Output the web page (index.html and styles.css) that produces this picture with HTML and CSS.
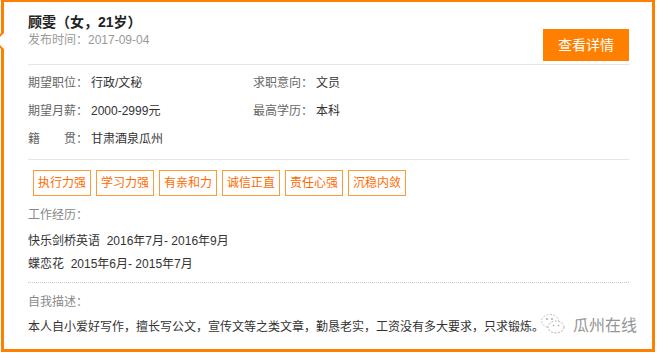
FILE: index.html
```html
<!DOCTYPE html>
<html>
<head>
  <meta charset="utf-8">
  <link rel="stylesheet" href="styles.css">
</head>
<body>
  <div class="card">
    <div class="head">
      <div class="who">
        <h2 class="name">顾雯（女，21岁）</h2>
        <p class="date">发布时间：2017-09-04</p>
      </div>
      <a class="more" href="#">查看详情</a>
    </div>

    <div class="info">
      <div class="row"><span class="lbl">期望职位：</span><span class="val">行政/文秘</span></div>
      <div class="row"><span class="lbl">求职意向：</span><span class="val">文员</span></div>
      <div class="row"><span class="lbl">期望月薪：</span><span class="val">2000-2999元</span></div>
      <div class="row"><span class="lbl">最高学历：</span><span class="val">本科</span></div>
      <div class="row"><span class="lbl">籍　　贯：</span><span class="val">甘肃酒泉瓜州</span></div>
    </div>

    <div class="tags">
      <span class="tag">执行力强</span>
      <span class="tag">学习力强</span>
      <span class="tag">有亲和力</span>
      <span class="tag">诚信正直</span>
      <span class="tag">责任心强</span>
      <span class="tag">沉稳内敛</span>
    </div>

    <div class="work">
      <p class="sub">工作经历：</p>
      <p class="job">快乐剑桥英语&nbsp;&nbsp;2016年7月- 2016年9月</p>
      <p class="job">蝶恋花&nbsp;&nbsp;2015年6月- 2015年7月</p>
    </div>

    <div class="self">
      <p class="sub">自我描述：</p>
      <p class="desc">本人自小爱好写作，擅长写公文，宣传文等之类文章，勤恳老实，工资没有多大要求，只求锻炼。</p>
    </div>

    <!-- 公众号水印 -->
    <div class="mark">
      <svg width="26" height="22" viewBox="0 0 26 22">
        <ellipse cx="10" cy="8" rx="8.5" ry="6.5" fill="none" stroke="#bbb" stroke-width="1" stroke-dasharray="2 1.5"/>
        <ellipse cx="16" cy="14" rx="8" ry="6" fill="#fff" stroke="#aaa" stroke-width="1" stroke-dasharray="2 1.5"/>
        <circle cx="7" cy="6" r="0.9" fill="#999"/>
        <circle cx="12" cy="6" r="0.9" fill="#999"/>
        <circle cx="13.5" cy="12.5" r="0.8" fill="#999"/>
        <circle cx="18.5" cy="12.5" r="0.8" fill="#999"/>
      </svg>
      <span>瓜州在线</span>
    </div>
  </div>
</body>
</html>
```

FILE: styles.css
```css
body {
  margin: 0;
  background: #fff;
  font-family: "Liberation Sans", "Noto Sans CJK SC", sans-serif;
  font-size: 12px;
  color: #333;
}

p, h2 {
  margin: 0;
}

.card {
  position: relative;
  box-sizing: border-box;
  width: 654px;
  height: 353px;
  margin: -1px 0 0 1px;
  padding: 0 23px 0 24px;
  border: 3px solid #ff7f00;
  background: #fff;
}

/* 左侧小箭头 */
.card::before,
.card::after {
  content: "";
  position: absolute;
  top: 31px;
  border-top: 8px solid transparent;
  border-bottom: 8px solid transparent;
}
.card::before {
  left: -11px;
  border-right: 8px solid #ff7f00;
}
.card::after {
  left: -8px;
  border-right: 8px solid #fff;
}

.head {
  display: flex;
  justify-content: space-between;
  align-items: flex-start;
  padding: 11px 0 3px;
  border-bottom: 1px solid #e6e6e6;
}

.name {
  font-size: 14px;
  font-weight: bold;
  line-height: 18px;
  color: #222;
}

.date {
  line-height: 18px;
  color: #999;
}

.more {
  display: block;
  width: 86px;
  height: 32px;
  margin-top: 16px;
  background: #ff8000;
  color: #fff;
  font-size: 14px;
  line-height: 32px;
  text-align: center;
  text-decoration: none;
}

.info {
  display: grid;
  grid-template-columns: 225px 1fr;
  padding: 4px 0 6px;
  border-bottom: 1px solid #e6e6e6;
}

.row {
  line-height: 28px;
}

.lbl {
  display: inline-block;
  width: 63px;
  color: #666;
}

.val {
  color: #333;
}

.tags {
  display: flex;
  gap: 5px;
  padding: 10px 0 0 5px;
}

.tag {
  padding: 0 4px;
  border: 1px solid #ff9a3c;
  color: #ff6a00;
  line-height: 24px;
}

.work {
  margin-top: 9px;
  padding-bottom: 6px;
  border-bottom: 1px dotted #c8c8c8;
}

.sub {
  line-height: 20px;
  color: #888;
}

.job {
  line-height: 23px;
}

.work .sub {
  margin-bottom: 5px;
}

.self {
  margin-top: 9px;
}

.desc {
  margin-top: 5px;
  line-height: 20px;
}

.mark {
  position: absolute;
  left: 536px;
  top: 310px;
  display: flex;
  align-items: center;
  gap: 7px;
  color: #8a8a8a;
  font-size: 16px;
  opacity: 0.9;
}
```
